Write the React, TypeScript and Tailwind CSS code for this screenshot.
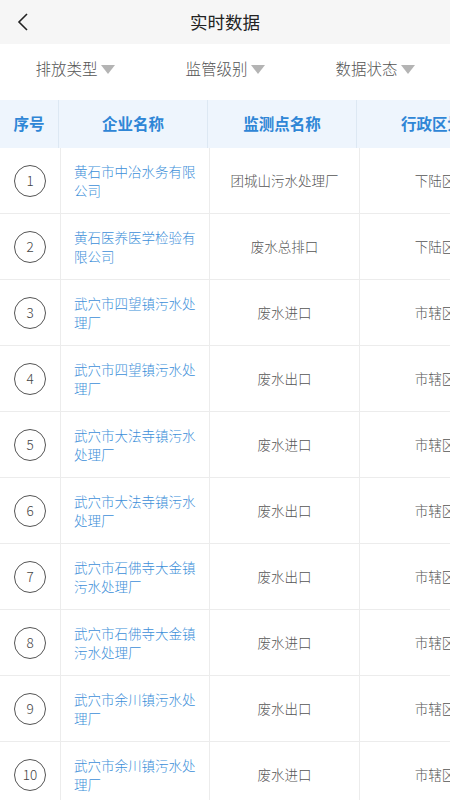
import React from "react";

const rows = [
  { name: "黄石市中冶水务有限公司", point: "团城山污水处理厂", area: "下陆区" },
  { name: "黄石医养医学检验有限公司", point: "废水总排口", area: "下陆区" },
  { name: "武穴市四望镇污水处理厂", point: "废水进口", area: "市辖区" },
  { name: "武穴市四望镇污水处理厂", point: "废水出口", area: "市辖区" },
  { name: "武穴市大法寺镇污水处理厂", point: "废水进口", area: "市辖区" },
  { name: "武穴市大法寺镇污水处理厂", point: "废水出口", area: "市辖区" },
  { name: "武穴市石佛寺大金镇污水处理厂", point: "废水出口", area: "市辖区" },
  { name: "武穴市石佛寺大金镇污水处理厂", point: "废水进口", area: "市辖区" },
  { name: "武穴市余川镇污水处理厂", point: "废水出口", area: "市辖区" },
  { name: "武穴市余川镇污水处理厂", point: "废水进口", area: "市辖区" },
];

const filters = ["排放类型", "监管级别", "数据状态"];

function Caret() {
  return (
    <svg width="14" height="9" viewBox="0 0 14 9" className="ml-[3px] mt-[1px]">
      <path d="M0 0 H14 L7 9 Z" fill="#b4b4b4" />
    </svg>
  );
}

export default function App() {
  return (
    <div
      className="w-[450px] h-[800px] overflow-hidden bg-white"
      style={{ fontFamily: '"Noto Sans CJK SC", "Noto Sans", sans-serif' }}
    >
      <div className="relative flex h-[44px] items-center justify-center bg-[#f6f6f6]">
        <svg
          width="12"
          height="18"
          viewBox="0 0 12 18"
          className="absolute left-[17px] top-[13px]"
        >
          <path d="M10 1 L2 9 L10 17" fill="none" stroke="#222" strokeWidth="1.6" />
        </svg>
        <span className="text-[17.5px] text-[#222]">实时数据</span>
      </div>

      <div className="mb-[6px] grid h-[50px] grid-cols-3 items-center">
        {filters.map((f) => (
          <div key={f} className="flex items-center justify-center">
            <span className="text-[15.5px] font-light text-[#555]">{f}</span>
            <Caret />
          </div>
        ))}
      </div>

      <div className="w-[560px]">
        <div className="flex h-[48px] bg-[#eef5fd] text-[15.5px] font-bold text-[#2f86d6]">
          <div className="flex w-[59px] shrink-0 items-center justify-center border-r border-[#dde8f3]">序号</div>
          <div className="flex w-[149px] shrink-0 items-center justify-center border-r border-[#dde8f3]">企业名称</div>
          <div className="flex w-[149px] shrink-0 items-center justify-center border-r border-[#dde8f3]">监测点名称</div>
          <div className="flex w-[150px] shrink-0 items-center justify-center">行政区划</div>
        </div>

        {rows.map((r, i) => (
          <div key={i} className="flex h-[66px] border-b border-[#ececec]">
            <div className="flex w-[61px] shrink-0 items-center justify-center border-r border-[#ececec]">
              <div className="flex h-[32px] w-[32px] items-center justify-center rounded-full border border-[#555] text-[13.5px] font-light text-[#444]">
                {i + 1}
              </div>
            </div>
            <div className="flex w-[149px] shrink-0 items-center border-r border-[#ececec] pl-[13px] pr-[10px]">
              <span className="text-[13.5px] font-light leading-[19px] text-[#3d8fd9]">{r.name}</span>
            </div>
            <div className="flex w-[150px] shrink-0 items-center justify-center border-r border-[#ececec]">
              <span className="text-[13.5px] font-light text-[#555]">{r.point}</span>
            </div>
            <div className="flex w-[150px] shrink-0 items-center justify-center">
              <span className="text-[13.5px] font-light text-[#555]">{r.area}</span>
            </div>
          </div>
        ))}
      </div>
    </div>
  );
}
